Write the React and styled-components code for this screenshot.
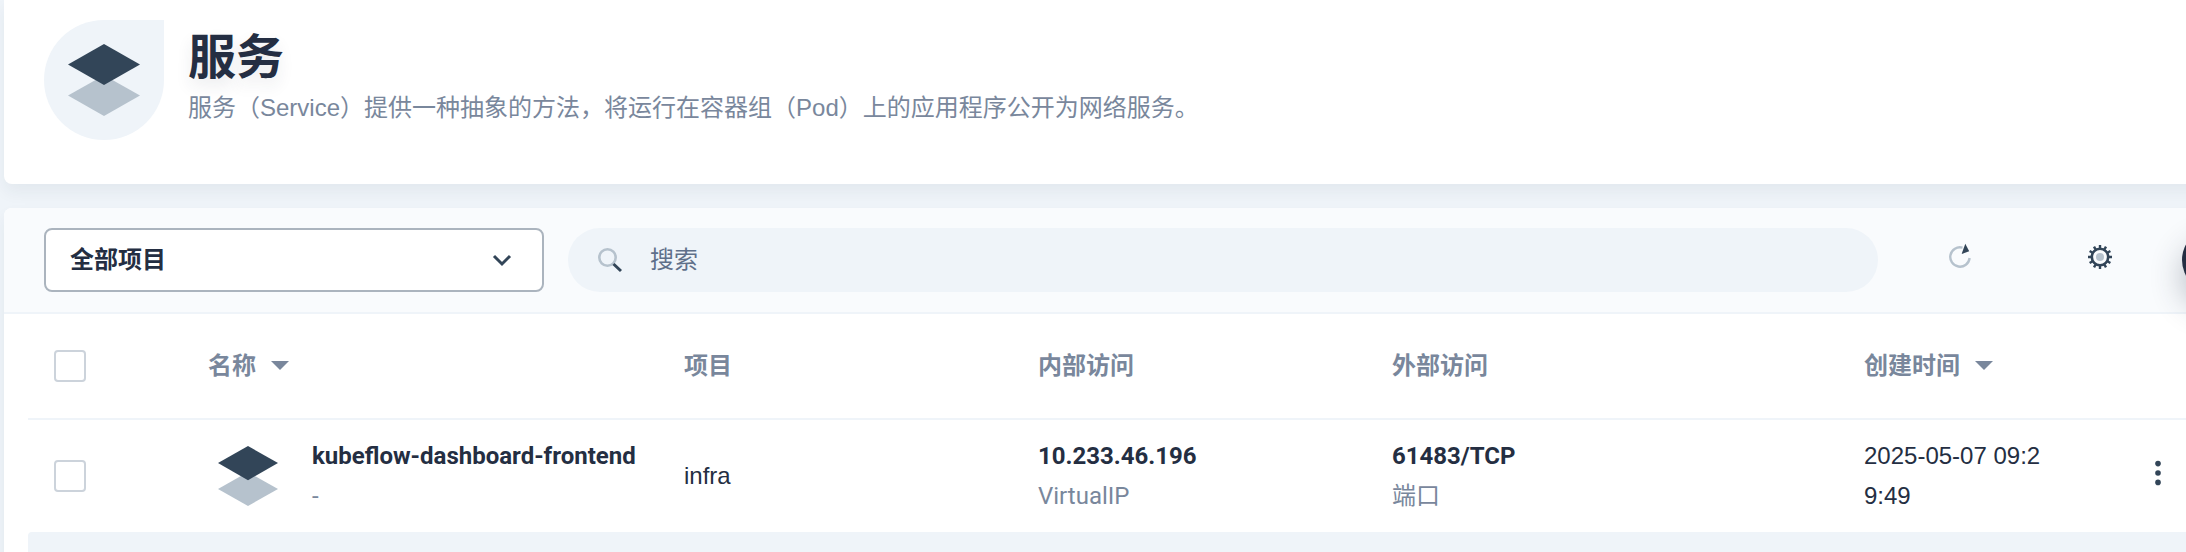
import React from 'react'
import styled, { createGlobalStyle, css } from 'styled-components'

const GlobalStyle = createGlobalStyle`
  * {
    box-sizing: border-box;
  }

  body {
    margin: 0;
    background-color: #eff4f9;
    color: #242e42;
    font-family: Roboto, 'Noto Sans CJK SC', sans-serif;
    font-size: 24px;
    line-height: 40px;
  }

  button,
  input,
  select {
    font: inherit;
    color: inherit;
  }
`

const plainFont = css`
  font-family: 'Liberation Sans', 'Noto Sans CJK SC', sans-serif;
`

const Viewport = styled.div`
  height: 100vh;
  overflow: hidden;
`

// the content is wider than the window, the rest is cut off on the right
const Page = styled.main`
  display: flex;
  flex-direction: column;
  gap: 24px;
  width: calc(100% + 226px);
  padding-left: 4px;
`

const Banner = styled.header`
  display: flex;
  gap: 24px;
  padding: 20px 40px 44px;
  background-color: #fff;
  border-radius: 0 0 8px 8px;
  box-shadow: 0 8px 16px rgba(36, 46, 66, 0.06);
`

const Leaf = styled.div`
  display: flex;
  align-items: center;
  justify-content: center;
  width: 120px;
  height: 120px;
  border-radius: 60px 0 60px 60px;
  background-color: #eff4f9;
`

const Title = styled.h1`
  margin: 8px 0 0;
  font-size: 48px;
  line-height: 60px;
  font-weight: 700;
  text-shadow: 0 8px 16px rgba(36, 46, 66, 0.1);
`

const Description = styled.p`
  margin: 0;
  color: #79879c;
  ${plainFont}
`

const Panel = styled.section`
  background-color: #fff;
  border-radius: 8px;
  box-shadow: 0 8px 16px rgba(36, 46, 66, 0.06);
`

const Toolbar = styled.div`
  display: flex;
  align-items: center;
  padding: 20px 40px;
  background-color: #f9fbfd;
  border-bottom: 2px solid #eff4f9;
  border-radius: 8px 8px 0 0;
`

const SelectBox = styled.label`
  display: grid;
  align-items: center;
  width: 500px;
  margin-right: 24px;

  > * {
    grid-area: 1 / 1;
  }

  > svg {
    justify-self: end;
    margin-right: 26px;
    pointer-events: none;
  }
`

const Select = styled.select`
  appearance: none;
  width: 100%;
  height: 64px;
  padding: 0 24px;
  border: 2px solid #abb4be;
  border-radius: 8px;
  background-color: #fff;
  font-weight: 700;
`

const SearchBox = styled.label`
  display: flex;
  flex: 1;
  align-items: center;
  gap: 24px;
  height: 64px;
  padding: 0 26px;
  border-radius: 32px;
  background-color: #eff4f9;
`

const SearchInput = styled.input`
  flex: 1;
  padding: 0;
  border: 0;
  outline: 0;
  background: transparent;

  &::placeholder {
    color: #5f708a;
    opacity: 1;
  }
`

const Actions = styled.div`
  display: flex;
  align-items: center;
  gap: 76px;
  margin: 0 50px;
`

const IconButton = styled.button`
  display: inline-flex;
  align-items: center;
  justify-content: center;
  width: 64px;
  height: 64px;
  padding: 0 0 6px;
  border: 0;
  background: transparent;
`

const CreateButton = styled.button`
  width: 190px;
  height: 64px;
  border: 0;
  border-radius: 32px;
  background-color: #242e42;
  box-shadow: 0 16px 32px rgba(36, 46, 66, 0.3);
`

const TableWrap = styled.div`
  padding: 0 24px;
`

const Table = styled.table`
  width: 100%;
  table-layout: fixed;
  border-collapse: separate;
  border-spacing: 0;
`

const Col = styled.col`
  width: ${props => props.$width};
`

const Th = styled.th`
  height: 106px;
  padding: 0 24px;
  border-bottom: 2px solid #eff4f9;
  color: #79879c;
  font-weight: 700;
  text-align: left;
`

const Td = styled.td`
  height: 112px;
  padding: 0 24px;
  word-break: break-all;
  ${props => props.$plain && plainFont}
`

const Row = styled.tr`
  ${props => props.$active && css`
    ${Td} {
      background-color: #eff4f9;
    }
    ${Td}:first-child {
      border-radius: 4px 0 0 4px;
    }
    ${Td}:last-child {
      border-radius: 0 4px 4px 0;
    }
  `}
`

const Checkbox = styled.input`
  appearance: none;
  display: block;
  width: 32px;
  height: 32px;
  margin: 0 2px;
  border: 2px solid #ccd3db;
  border-radius: 4px;
  background-color: #fff;
`

const SortLabel = styled.span`
  display: flex;
  align-items: center;
  gap: 14px;
`

const NameCell = styled.div`
  display: flex;
  align-items: center;
  gap: 24px;
  white-space: nowrap;
`

const Strong = styled.div`
  font-weight: 700;
`

const NameLink = styled.a`
  color: inherit;
  font-weight: 700;
  text-decoration: none;
`

const Sub = styled.div`
  color: #79879c;
`

const MoreButton = styled(IconButton)`
  margin-left: 26px;
`

const LayersIcon = ({ size }) => (
  <svg width={size} height={size} viewBox="0 0 24 24" aria-hidden="true">
    <path d="M12 10.8l9 5.1-9 5.1-9-5.1z" fill="#b6c2cd" />
    <path d="M12 3l9 5.1-9 5.15-9-5.15z" fill="#324558" />
  </svg>
)

const ChevronIcon = () => (
  <svg width="32" height="32" viewBox="0 0 32 32" fill="none" aria-hidden="true">
    <path d="M8 12l8 8 8-8" stroke="#324558" strokeWidth="3" />
  </svg>
)

const SearchIcon = () => (
  <svg width="32" height="32" viewBox="0 0 32 32" fill="none" aria-hidden="true">
    <circle cx="13.5" cy="13.5" r="8.2" stroke="#b6c2cd" strokeWidth="2.6" />
    <path d="M19.5 20l7.5 7" stroke="#324558" strokeWidth="3" />
  </svg>
)

const RefreshIcon = () => (
  <svg width="32" height="32" viewBox="0 0 32 32" fill="none" aria-hidden="true">
    <path d="M18.5 6.6A9.7 9.7 0 1 0 25.6 17" stroke="#b6c2cd" strokeWidth="2.4" />
    <path d="M21.3 2.7l3.9 7.6-7.6 2.6z" fill="#324558" />
  </svg>
)

const teeth = Array.from({ length: 12 }, (_, i) => i * 30)

const GearIcon = () => (
  <svg width="32" height="32" viewBox="0 0 32 32" fill="none" aria-hidden="true">
    {teeth.map(angle => (
      <path key={angle} d="M14.8 4h2.4v4h-2.4z" fill="#324558" transform={`rotate(${angle} 16 16)`} />
    ))}
    <circle cx="16" cy="16" r="8.2" stroke="#324558" strokeWidth="2.6" />
    <circle cx="16" cy="16" r="4" fill="#b6c2cd" />
  </svg>
)

const CaretIcon = () => (
  <svg width="20" height="10" viewBox="0 0 20 10" aria-hidden="true">
    <path d="M1 0h18l-9 9z" fill="#79879c" />
  </svg>
)

const MoreIcon = () => (
  <svg width="32" height="32" viewBox="0 0 32 32" fill="#324558" aria-hidden="true">
    <circle cx="16" cy="6.6" r="2.8" />
    <circle cx="16" cy="16" r="2.8" />
    <circle cx="16" cy="25.4" r="2.8" />
  </svg>
)

const services = [
  {
    name: 'kubeflow-dashboard-frontend',
    desc: '-',
    project: 'infra',
    internal: '10.233.46.196',
    internalType: 'VirtualIP',
    external: '61483/TCP',
    externalType: '端口',
    created: '2025-05-07 09:29:49',
  },
]

const App = () => {
  return (
    <Viewport>
      <GlobalStyle />
      <Page>
        <Banner>
          <Leaf>
            <LayersIcon size={96} />
          </Leaf>
          <div>
            <Title>服务</Title>
            <Description>
              服务（Service）提供一种抽象的方法，将运行在容器组（Pod）上的应用程序公开为网络服务。
            </Description>
          </div>
        </Banner>

        <Panel>
          <Toolbar>
            <SelectBox>
              <Select aria-label="项目">
                <option>全部项目</option>
              </Select>
              <ChevronIcon />
            </SelectBox>
            <SearchBox>
              <SearchIcon />
              <SearchInput type="text" placeholder="搜索" aria-label="搜索" />
            </SearchBox>
            <Actions>
              <IconButton type="button" aria-label="刷新"><RefreshIcon /></IconButton>
              <IconButton type="button" aria-label="设置"><GearIcon /></IconButton>
            </Actions>
            <CreateButton type="button" aria-label="创建" />
          </Toolbar>

          <TableWrap>
            <Table>
              <colgroup>
                <Col $width="156px" />
                <Col />
                <Col $width="15%" />
                <Col $width="15%" />
                <Col $width="20%" />
                <Col $width="10%" />
                <Col $width="312px" />
              </colgroup>
              <thead>
                <tr>
                  <Th><Checkbox type="checkbox" aria-label="全选" /></Th>
                  <Th><SortLabel>名称<CaretIcon /></SortLabel></Th>
                  <Th>项目</Th>
                  <Th>内部访问</Th>
                  <Th>外部访问</Th>
                  <Th><SortLabel>创建时间<CaretIcon /></SortLabel></Th>
                  <Th />
                </tr>
              </thead>
              <tbody>
                {services.map(item => (
                  <Row key={item.name}>
                    <Td><Checkbox type="checkbox" aria-label={item.name} /></Td>
                    <Td>
                      <NameCell>
                        <LayersIcon size={80} />
                        <div>
                          <NameLink href="#">{item.name}</NameLink>
                          <Sub>{item.desc}</Sub>
                        </div>
                      </NameCell>
                    </Td>
                    <Td $plain>{item.project}</Td>
                    <Td>
                      <Strong>{item.internal}</Strong>
                      <Sub>{item.internalType}</Sub>
                    </Td>
                    <Td>
                      <Strong>{item.external}</Strong>
                      <Sub>{item.externalType}</Sub>
                    </Td>
                    <Td $plain>{item.created}</Td>
                    <Td>
                      <MoreButton type="button" aria-label="更多"><MoreIcon /></MoreButton>
                    </Td>
                  </Row>
                ))}
                <Row $active>
                  <Td /><Td /><Td /><Td /><Td /><Td /><Td />
                </Row>
              </tbody>
            </Table>
          </TableWrap>
        </Panel>
      </Page>
    </Viewport>
  )
}

export default App
